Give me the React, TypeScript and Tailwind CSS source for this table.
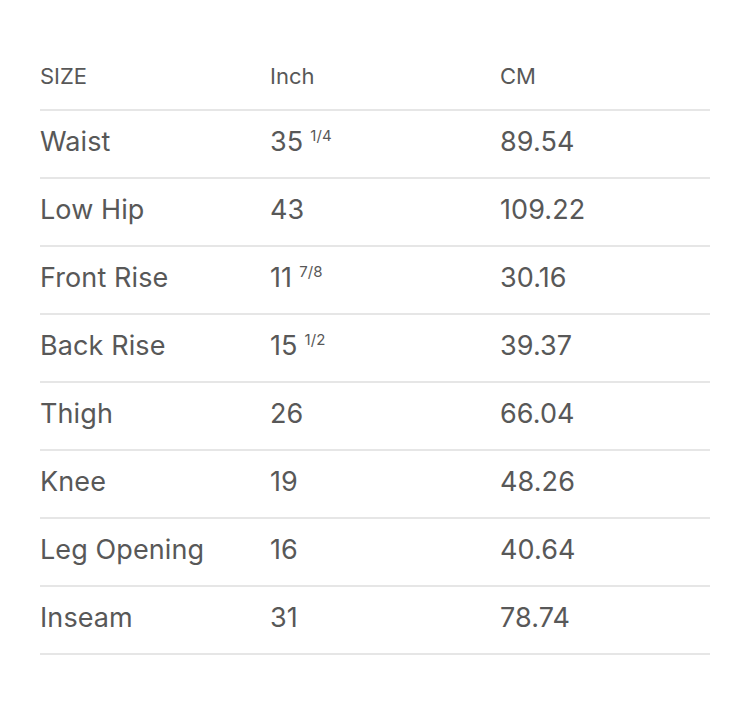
import React from "react";

const rows: [string, string, string | null, string][] = [
  ["Waist", "35", "1/4", "89.54"],
  ["Low Hip", "43", null, "109.22"],
  ["Front Rise", "11", "7/8", "30.16"],
  ["Back Rise", "15", "1/2", "39.37"],
  ["Thigh", "26", null, "66.04"],
  ["Knee", "19", null, "48.26"],
  ["Leg Opening", "16", null, "40.64"],
  ["Inseam", "31", null, "78.74"],
];

export default function App() {
  return (
    <div
      className="w-[750px] h-[720px] bg-white pt-[43px] px-[40px] text-[#585858]"
      style={{ fontFamily: "Inter, Lato, sans-serif" }}
    >
      <div className="w-[670px]">
        <div className="grid grid-cols-[230px_230px_1fr] items-center h-[68px] border-b-2 border-[#e6e6e6] text-[22px]">
          <div>SIZE</div>
          <div>Inch</div>
          <div>CM</div>
        </div>
        {rows.map(([name, inch, frac, cm]) => (
          <div
            key={name}
            className="grid grid-cols-[230px_230px_1fr] items-center h-[68px] border-b-2 border-[#e6e6e6] text-[27px] pb-[4px] tracking-[0.1px]"
          >
            <div>{name}</div>
            <div>
              {inch}
              {frac && (
                <span className="text-[15px] align-[10px] ml-[7px]">{frac}</span>
              )}
            </div>
            <div>{cm}</div>
          </div>
        ))}
      </div>
    </div>
  );
}
